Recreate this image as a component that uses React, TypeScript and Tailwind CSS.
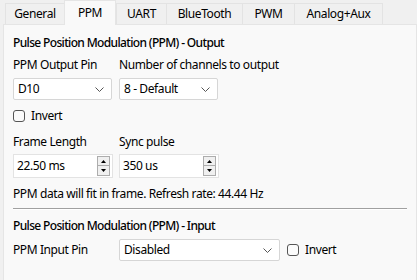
import React from "react";

const Chevron = () => (
  <svg width="9" height="5" viewBox="0 0 9 5" className="shrink-0">
    <polyline points="0.5,0.5 4.5,4.5 8.5,0.5" fill="none" stroke="#555" strokeWidth="1" />
  </svg>
);

const Combo = ({ value, w }: { value: string; w: string }) => (
  <div className={`${w} h-[22px] bg-white border border-[#d6d6d6] rounded-[2px] flex items-center justify-between pl-[4px] pr-[7px]`}>
    <span>{value}</span>
    <Chevron />
  </div>
);

const Spin = ({ value }: { value: string }) => (
  <div className="w-[100px] h-[24px] bg-white border border-[#e3e3e3] flex items-center justify-between pl-[3px] pr-[2px]">
    <span>{value}</span>
    <div className="flex flex-col gap-0">
      <div className="w-[13px] h-[10px] border border-[#adadad] bg-[#f0f0f0] flex items-center justify-center">
        <svg width="5" height="3" viewBox="0 0 5 3"><polygon points="2.5,0 5,3 0,3" fill="#000" /></svg>
      </div>
      <div className="w-[13px] h-[10px] border border-t-0 border-[#adadad] bg-[#f0f0f0] flex items-center justify-center">
        <svg width="5" height="3" viewBox="0 0 5 3"><polygon points="0,0 5,0 2.5,3" fill="#000" /></svg>
      </div>
    </div>
  </div>
);

const Check = ({ label }: { label: string }) => (
  <div className="flex items-center gap-[6px]">
    <div className="w-[12px] h-[12px] rounded-[3px] border border-[#555] bg-[#fbfbfb]" />
    <span>{label}</span>
  </div>
);

const tabs = [
  { name: "General", w: "w-[60px]" },
  { name: "PPM", w: "w-[52px]", sel: true },
  { name: "UART", w: "w-[51px]" },
  { name: "BlueTooth", w: "w-[77px]" },
  { name: "PWM", w: "w-[53px]" },
  { name: "Analog+Aux", w: "w-[89px]" },
];

export default function App() {
  return (
    <div className="w-[417px] h-[280px] bg-[#f0f0f0] text-[12px] leading-[16px] tracking-[-0.4px] text-black overflow-hidden font-['Segoe_UI','Noto_Sans',sans-serif]">
      <div className="flex items-end h-[24px] pl-[5px]">
        {tabs.map((t) =>
          t.sel ? (
            <div
              key={t.name}
              className={`${t.w} h-[25px] -mb-[1px] relative z-10 bg-[#f9f9f9] border border-b-0 border-[#e5e5e5] flex items-center justify-center pb-[1px]`}
            >
              {t.name}
            </div>
          ) : (
            <div
              key={t.name}
              className={`${t.w} h-[21px] bg-[#f0f0f0] border border-b-0 border-[#e3e3e3] flex items-center justify-center -mr-[1px]`}
            >
              {t.name}
            </div>
          )
        )}
      </div>
      <div className="ml-[3px] w-[414px] h-[257px] bg-[#f9f9f9] border border-[#e5e5e5] pt-[10px] pl-[9px] pr-[8px]">
        <div className="font-medium tracking-[-0.65px]">Pulse Position Modulation (PPM) - Output</div>
        <div className="flex gap-[7px] mt-[6px]">
          <div className="flex flex-col w-[99px]">
            <span>PPM Output Pin</span>
            <div className="mt-[5px]"><Combo value="D10" w="w-[99px]" /></div>
          </div>
          <div className="flex flex-col">
            <span>Number of channels to output</span>
            <div className="mt-[5px]"><Combo value="8 - Default" w="w-[99px]" /></div>
          </div>
        </div>
        <div className="mt-[8px]"><Check label="Invert" /></div>
        <div className="flex gap-[6px] mt-[10px]">
          <div className="flex flex-col">
            <span>Frame Length</span>
            <div className="mt-[4px]"><Spin value="22.50 ms" /></div>
          </div>
          <div className="flex flex-col">
            <span>Sync pulse</span>
            <div className="mt-[4px]"><Spin value="350 us" /></div>
          </div>
        </div>
        <div className="mt-[8px]">PPM data will fit in frame. Refresh rate: 44.44 Hz</div>
        <div className="mt-[6px] w-[394px] border-t border-[#a0a0a0] border-b border-b-white" />
        <div className="mt-[8px] font-medium tracking-[-0.65px]">Pulse Position Modulation (PPM) - Input</div>
        <div className="flex items-center mt-[5px]">
          <span className="w-[106px]">PPM Input Pin</span>
          <Combo value="Disabled" w="w-[161px]" />
          <div className="ml-[7px]"><Check label="Invert" /></div>
        </div>
      </div>
    </div>
  );
}
